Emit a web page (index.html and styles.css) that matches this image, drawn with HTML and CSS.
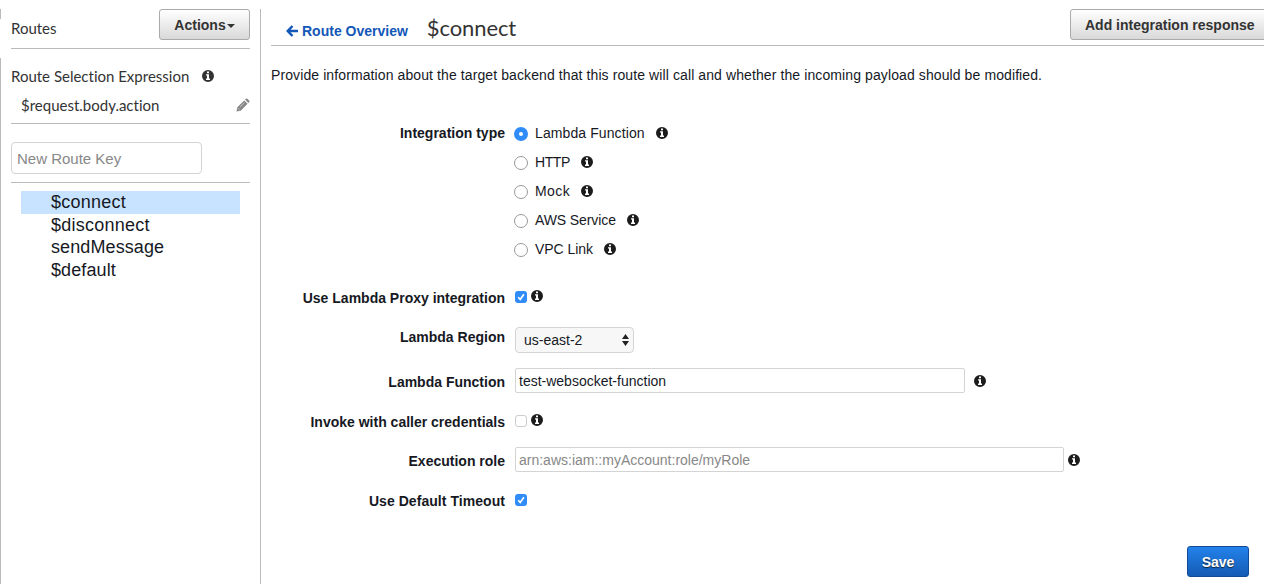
FILE: index.html
```html
<!DOCTYPE html>
<html lang="en">
<head>
<meta charset="utf-8">
<title>Routes - $connect</title>
<link rel="stylesheet" href="styles.css">
</head>
<body>
<svg class="defs" aria-hidden="true">
  <symbol id="info" viewBox="0 0 12 12"><path fill-rule="evenodd" d="M6 0a6 6 0 1 1 0 12A6 6 0 0 1 6 0zM5 1.500v1.700h2V1.500zM4 4.300v1.100h1v3.200H4v1.300h4V8.600H7V4.300z"/></symbol>
  <symbol id="check" viewBox="0 0 12 12"><path d="M3.200 6.300 5.200 8.500 8.900 3.300" fill="none" stroke="#fff" stroke-width="1.700"/></symbol>
</svg>
<div class="app">
  <aside class="sidebar">
    <div class="side-head"><span class="side-title">Routes</span><button class="btn actions"><span>Actions</span><i class="caret"></i></button></div>
    <div class="expression">
      <div class="exp-label"><span>Route Selection Expression</span><svg class="info side-info"><use href="#info"/></svg></div>
      <div class="exp-value"><span>$request.body.action</span>
        <svg class="pencil" viewBox="0 0 14 14"><path d="M.5 13.500l.8-4.200L8.200 2.400l3.400 3.400L4.700 12.700zM9 1.600l.9-.9q.7-.6 1.400 0l2 2q.6.700 0 1.400l-.9.9z"/><path class="tip" d="M2.200 10.300l1.600 1.600M4 9l4.300-4.300"/></svg>
      </div>
    </div>
    <div class="new-route"><input class="route-key" placeholder="New Route Key"></div>
    <ul class="routes">
      <li class="selected">$connect</li>
      <li class="wide">$disconnect</li>
      <li>sendMessage</li>
      <li>$default</li>
    </ul>
  </aside>
  <main class="main">
    <header class="main-head">
      <a class="back"><svg class="arrow" viewBox="0 0 12 12"><path d="M6.500 1 1.700 6l4.800 5M2 6h10" /></svg><span>Route Overview</span></a>
      <h1>$connect</h1>
      <button class="btn add">Add integration response</button>
    </header>
    <p class="intro">Provide information about the target backend that this route will call and whether the incoming payload should be modified.</p>
    <form class="form">
      <div class="row types">
        <span class="label">Integration type</span>
        <div class="options">
          <label class="option"><i class="radio on"></i><span class="o-lambda">Lambda Function</span><svg class="info"><use href="#info"/></svg></label>
          <label class="option"><i class="radio"></i><span class="o-http">HTTP</span><svg class="info"><use href="#info"/></svg></label>
          <label class="option"><i class="radio"></i><span class="o-mock">Mock</span><svg class="info"><use href="#info"/></svg></label>
          <label class="option"><i class="radio"></i><span class="o-aws">AWS Service</span><svg class="info"><use href="#info"/></svg></label>
          <label class="option"><i class="radio"></i><span class="o-vpc">VPC Link</span><svg class="info"><use href="#info"/></svg></label>
        </div>
      </div>
      <div class="row proxy"><span class="label">Use Lambda Proxy integration</span><svg class="box on"><use href="#check"/></svg><svg class="info box-info"><use href="#info"/></svg></div>
      <div class="row region"><span class="label">Lambda Region</span><div class="select"><span>us-east-2</span><svg class="updown" viewBox="0 0 7 12"><path d="M3.500 0 7 5H0zM0 7h7l-3.500 5z"/></svg></div></div>
      <div class="row function"><span class="label">Lambda Function</span><input class="text fn" value="test-websocket-function"><svg class="info fn-info"><use href="#info"/></svg></div>
      <div class="row invoke"><span class="label">Invoke with caller credentials</span><svg class="box"></svg><svg class="info box-info"><use href="#info"/></svg></div>
      <div class="row role"><span class="label">Execution role</span><input class="text arn" placeholder="arn:aws:iam::myAccount:role/myRole"><svg class="info role-info"><use href="#info"/></svg></div>
      <div class="row timeout"><span class="label l-timeout">Use Default Timeout</span><svg class="box on"><use href="#check"/></svg></div>
    </form>
    <footer class="foot"><button class="save">Save</button></footer>
  </main>
</div>
</body>
</html>
```
FILE: styles.css
```css
* { box-sizing: border-box; }
body { margin: 0; background: #fff; color: #16191f; font: 14px/20px "Liberation Sans", Arial, sans-serif; overflow: hidden; }
.defs { display: none; }
.app { display: flex; width: 1264px; height: 584px; }
.info { display: block; flex: none; width: 12px; height: 12px; fill: #1c1c1c; }
.btn { height: 31px; border: 1px solid #aaa; border-radius: 3px; background: linear-gradient(#fff, #d9d9d9); color: #333; font: bold 14px/20px "Liberation Sans", Arial, sans-serif; padding: 0; white-space: nowrap; }

/* Sidebar */
.sidebar { flex: none; width: 261px; padding: 9px 11px 0 11px; color: #333; font-family: Lato, sans-serif; font-size: 15px; font-variant-ligatures: none;
  background: linear-gradient(#bbb, #bbb) 0 9px / 1px 10px no-repeat, linear-gradient(#bbb, #bbb) 0 58px / 1px 526px no-repeat, linear-gradient(#bbb, #bbb) 260px 9px / 1px 575px no-repeat; }
.side-head { display: flex; justify-content: space-between; height: 40px; border-bottom: 1px solid #bbb; }
.side-title { padding-top: 9px; }
.actions { display: flex; align-items: center; justify-content: center; width: 91px; gap: 1px; }
.caret { border: 4px solid transparent; border-top-color: #333; border-bottom: 0; margin-top: 2px; }
.expression { height: 75px; padding-top: 17px; border-bottom: 1px solid #bbb; }
.exp-label { display: flex; align-items: center; height: 20px; }
.side-info { margin-left: 13px; fill: #333; }
.exp-value { display: flex; justify-content: space-between; align-items: center; height: 20px; margin-top: 9px; padding-left: 10px; }
.pencil { width: 14px; height: 14px; fill: #888; }
.tip { fill: none; stroke: #ddd; stroke-width: 0.700; }
.new-route { height: 59px; padding-top: 18px; border-bottom: 1px solid #bbb; }
.route-key { display: block; width: 191px; height: 32px; padding: 0 5px; border: 1px solid #d4d4d4; border-radius: 4px; outline: 0; font: 15px "Liberation Sans", Arial, sans-serif; }
input::placeholder { color: #888; opacity: 1; }
.routes { list-style: none; margin: 8px 10px 0; padding: 0; font: 18px/22.700px "Liberation Sans", Arial, sans-serif; color: #16191f; }
.routes li { padding-left: 30px; height: 22.700px; letter-spacing: .1px; }
.routes .selected { background: #c8e3ff; letter-spacing: .25px; }
.routes .wide { letter-spacing: .25px; }

/* Content */
.main { width: 1003px; padding: 9px 0 0 10px; }
.main-head { display: flex; height: 37px; border-bottom: 1px solid #bbb; }
.back { display: flex; align-items: center; height: 20px; margin: 12px 0 0 15px; gap: 4px; color: #1358b8; font-weight: bold; }
.arrow { width: 12px; height: 12px; fill: none; stroke: #1358b8; stroke-width: 2.500; }
h1 { margin: 4px 0 0 19px; color: #333; font: 22px/30px Lato, sans-serif; letter-spacing: -.1px; }
.add { width: 200px; margin: 0 -6px 0 auto; text-align: left; padding-left: 14px; }
.intro { margin: 19px 0 0; height: 20px; white-space: nowrap; letter-spacing: .1px; }
.form { margin-top: 38px; }
.row { display: flex; align-items: center; }
.label { width: 234px; margin-right: 10px; text-align: right; font-weight: bold; white-space: nowrap; }
.types { align-items: flex-start; height: 145px; }
.option { display: flex; align-items: center; height: 20px; margin: 0 0 9px -1px; }
.option .info { margin-left: 11px; }
.o-lambda { letter-spacing: .1px; }
.o-http { letter-spacing: -.4px; }
.o-mock { letter-spacing: .4px; }
.o-aws { letter-spacing: -.1px; }
.o-vpc { letter-spacing: -.05px; }
.radio { width: 14px; height: 14px; margin: 2px 7px 0 0; border: 1px solid #999; border-radius: 50%; background: #fff; }
.radio.on { border: 5px solid #308cf8; }
.proxy { height: 20px; margin-top: 20px; }
.box { flex: none; width: 12px; height: 12px; border: 1px solid #ccc; border-radius: 3px; margin-top: -2px; }
.box.on { border: 0; background: #308cf8; }
.box-info { margin: -4px 0 0 4px; }
.region { height: 26px; margin-top: 19px; }
.region .label { margin-top: -6px; }
.select { display: flex; align-items: center; justify-content: space-between; width: 119px; height: 26px; padding: 0 4px 0 8px; border: 1px solid #d4d4d4; border-radius: 4px; background: #f7f7f7; }
.updown { width: 7px; height: 12px; fill: #222; }
.function { height: 25px; margin-top: 15px; }
.function .label, .role .label { margin-top: 2px; }
.text { height: 25px; border: 1px solid #d4d4d4; border-radius: 2px; outline: 0; padding: 0 3px; font: 14px "Liberation Sans", Arial, sans-serif; color: #16191f; }
.fn { width: 450px; }
.fn-info { margin-left: 9px; }
.invoke { height: 20px; margin-top: 19px; }
.role { height: 25px; margin-top: 15px; }
.arn { width: 549px; }
.role-info { margin-left: 4px; }
.timeout { height: 20px; margin-top: 19px; }
.l-timeout { letter-spacing: .05px; }
.foot { display: flex; justify-content: flex-end; padding: 35px 15px 0 0; }
.save { width: 62px; height: 31px; padding: 0; border: 1px solid #124b93; border-radius: 3px; background: linear-gradient(#2382eb, #145bb4); color: #fff; font: bold 14px "Liberation Sans", Arial, sans-serif; text-shadow: 0 1px 1px #123; }
```
